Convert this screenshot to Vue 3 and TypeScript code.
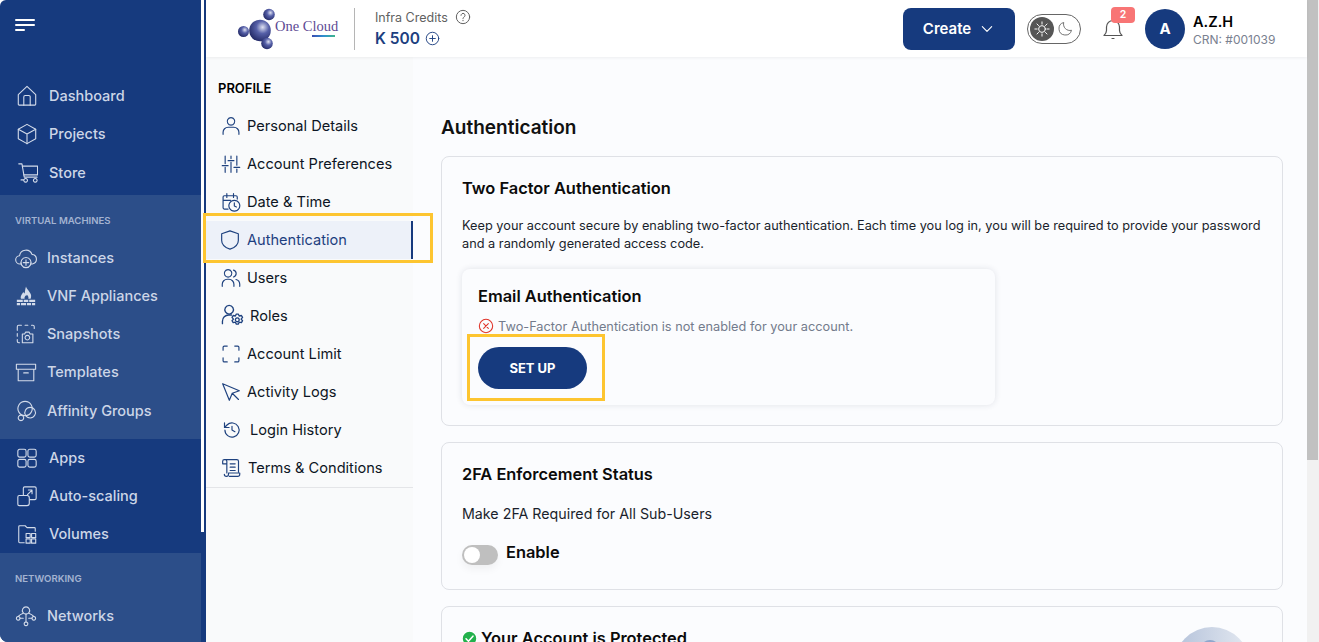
<script setup lang="ts">
interface Item { label: string; paths: string[]; size?: number; cls?: string }

const groupA: Item[] = [
  { label: 'Dashboard', paths: ['M2.500 21V10.500L12 1.500l9.500 9V21a1 1 0 0 1-1 1h-17a1 1 0 0 1-1-1Z', 'M8.500 22v-9a1.500 1.500 0 0 1 1.500-1.500h4a1.500 1.500 0 0 1 1.500 1.500v9'] },
  { label: 'Projects', paths: ['M12 1.500l9.500 5.300v10.400L12 22.500l-9.500-5.300V6.800Z', 'M2.500 6.800L12 12l9.500-5.200M12 12v10.500'] },
  { label: 'Store', paths: ['M3 2h3.500l2.500 14.500h14', 'M7 4.500h16.500V14H8.500', 'M10.500 18a2 2 0 1 0 .01 0ZM21 18a2 2 0 1 0 .01 0ZM8.500 19.500H5.500'] },
]
const groupB: Item[] = [
  { label: 'Instances', paths: ['M6.500 18.500H5.500a4.500 4.500 0 0 1-.5-9A7 7 0 0 1 18.500 8a5.300 5.300 0 0 1 .5 10.500H18', 'M12 11.500a5.500 5.500 0 1 0 .01 0ZM12 14v6M9 17h6'], cls: 'big' },
  { label: 'VNF Appliances', paths: ['M2 16h6.500v2.500H2ZM9.500 16h5v2.500h-5ZM15.500 16H22v2.500h-6.500ZM2 19.500h3.500V22H2ZM6.500 19.500H12V22H6.500ZM13 19.500h4.500V22H13ZM18.500 19.500H22V22h-3.500Z', 'M6.500 15c-1-3.500 1.500-5 2.500-7.500.6 1 1 1.500 1.500 1.800C11 7 11 4.500 12 1.500c1 3.500 5 6 5.500 9.500.2 1.500 0 3-.5 4h-2.500c.5-1.500 0-3-1.500-4.500-.3 1.200-1 1.500-1.500 1-.5 1-1.500 2-1 3.500Z'], cls: 'solid' },
  { label: 'Snapshots', paths: ['M5 21.500H4a1.500 1.500 0 0 1-1.500-1.500v-2M2.500 14.500v-3M2.500 8V4A1.500 1.500 0 0 1 4 2.500h3M11 2.500h3M18 2.500h1.500A1.500 1.500 0 0 1 21 4v2', 'M8 12h2.500l1-2h4l1 2H19.500v9.500H8Z', 'M13.500 13.500a2.500 2.500 0 1 0 .01 0Z'] },
  { label: 'Templates', paths: ['M1.500 3.500h21V9h-21ZM3.500 9v12.500h17V9M9.500 13h5'] },
  { label: 'Affinity Groups', paths: ['M11 1.500a7.800 7.800 0 1 0 .01 0Z', 'M16.500 8a5.800 5.800 0 1 0 .01 0Z', 'M6.500 16.500a3 3 0 1 0 .01 0Z'] },
]
const groupC: Item[] = [
  { label: 'Apps', paths: ['M4 2.500h5a2 2 0 0 1 2 2V9a2 2 0 0 1-2 2H4a2 2 0 0 1-2-2V4.500a2 2 0 0 1 2-2ZM15 2.500h5a2 2 0 0 1 2 2V9a2 2 0 0 1-2 2h-5a2 2 0 0 1-2-2V4.500a2 2 0 0 1 2-2ZM4 13.500h5a2 2 0 0 1 2 2V20a2 2 0 0 1-2 2H4a2 2 0 0 1-2-2v-4.500a2 2 0 0 1 2-2ZM15 13.500h5a2 2 0 0 1 2 2V20a2 2 0 0 1-2 2h-5a2 2 0 0 1-2-2v-4.500a2 2 0 0 1 2-2Z'] },
  { label: 'Auto-scaling', paths: ['M8 11V3.500A1.500 1.500 0 0 1 9.500 2h11A1.500 1.500 0 0 1 22 3.500v11a1.500 1.500 0 0 1-1.500 1.500H15', 'M3.500 11.500H12a2.500 2.500 0 0 1 2.500 2.500v6a2.500 2.500 0 0 1-2.500 2.500H3.500A1.500 1.500 0 0 1 2 21v-8a1.500 1.500 0 0 1 1.500-1.500Z', 'M12.500 10.500l5-5M13.500 5.500h4v4'] },
  { label: 'Volumes', paths: ['M9 21.500H4a1 1 0 0 1-1-1V4a1 1 0 0 1 1-1h6l2 2h8a1 1 0 0 1 1 1v3', 'M11 11.500h4.500V16H11ZM17 11.500h4.500V16H17ZM11 17.500h4.500V22H11ZM17 17.500h4.500V22H17Z'] },
]
const groupD: Item[] = [
  { label: 'Networks', paths: ['M12 2a4 4 0 1 0 .01 0Z', 'M3.500 12.500a2 2 0 1 0 .01 0ZM20.500 12.500a2 2 0 1 0 .01 0ZM12 18.500a2 2 0 1 0 .01 0Z', 'M9 9c-2 .8-4 2-5.500 3.500M15 9c2 .8 4 2 5.500 3.500M12 10v8.500M5.500 14.500H9M15 14.500h3.500'] },
]

const profile: Item[] = [
  { label: 'Personal Details', paths: ['M12 2a4.500 4.500 0 1 0 .01 0Z', 'M2.500 22v-2.500a6 6 0 0 1 6-6h7a6 6 0 0 1 6 6V22'] },
  { label: 'Account Preferences', paths: ['M5 2.500v9M5 16v6M12 2.500v3M12 10v12M19 2.500v11M19 18v4M1.500 14h7M8.500 8h7M15.500 16h7'] },
  { label: 'Date & Time', paths: ['M8.500 20.500H4a1.500 1.500 0 0 1-1.500-1.500V6A1.500 1.500 0 0 1 4 4.500h14A1.500 1.500 0 0 1 19.500 6v2.500M2.500 10h9M7 2v4.500M15 2v4.500', 'M16 10a6.500 6.500 0 1 0 .01 0ZM16 13v3.800l2.500 1.200'] },
  { label: 'Authentication', paths: ['M12 1l10 3.500v8c0 5-4 8.500-10 10.500C6 21 2 17.500 2 12.500v-8Z'], cls: 'active' },
  { label: 'Users', paths: ['M8.500 2a4.500 4.500 0 1 0 .01 0Z', 'M1.500 22v-2.500a6 6 0 0 1 6-6h2a6 6 0 0 1 6 6V22', 'M15 2.500a4.300 4.300 0 0 1 0 8.300M18 13.800a6 6 0 0 1 4.500 5.700V22'] },
  { label: 'Roles', paths: ['M8.500 1.500a4.500 4.500 0 1 0 .01 0Z', 'M1.500 20.500V18A6.500 6.500 0 0 1 8 11.500h3', 'M18 10.500l1 2 2.300-.5 1.200 2-1.500 1.800 1.500 1.700-1.200 2-2.300-.5-1 2h-2l-1-2-2.300.5-1.200-2 1.500-1.700-1.500-1.800 1.200-2 2.300.5 1-2Z', 'M17 14.500a2 2 0 1 0 .01 0Z'], size: 23, cls: 'wide' },
  { label: 'Account Limit', paths: ['M2.500 7.500V4A1.500 1.500 0 0 1 4 2.500h3.500M16.500 2.500H20A1.500 1.500 0 0 1 21.500 4v3.500M21.500 16.500V20a1.500 1.500 0 0 1-1.500 1.500h-3.500M7.500 21.500H4A1.500 1.500 0 0 1 2.500 20v-3.500'] },
  { label: 'Activity Logs', paths: ['M2 2l20 8.500-8.500 3L10 22ZM13.500 13.500L21 21'] },
  { label: 'Login History', paths: ['M3.500 12A8.500 8.500 0 1 0 6 6L3 9', 'M3 3.500V9h5.500M12 7.500V12l3.500 2'], cls: 'wider' },
  { label: 'Terms & Conditions', paths: ['M7 18V4a2 2 0 0 0-2-2H4a2 2 0 0 0-2 2v3h5M5 2h14a2 2 0 0 1 2 2v13', 'M10 22h10a2.500 2.500 0 0 0 2.500-2.500V18H9v1.500a2.500 2.500 0 0 1-5 0', 'M11 7h6M11 11h6M11 15h6'], cls: 'terms' },
]
</script>

<template>
  <div class="shell">
    <aside class="sidebar">
      <div class="thumb"></div>
      <section class="group dark first">
        <div class="burger"><i class="l1"></i><i class="l2"></i><i class="l3"></i></div>
        <a v-for="it in groupA" :key="it.label" class="side-item">
          <svg class="side-icon" viewBox="0 0 24 24"><path v-for="d in it.paths" :key="d" :d="d" /></svg>
          <span>{{ it.label }}</span>
        </a>
      </section>
      <section class="group light second">
        <h4>VIRTUAL MACHINES</h4>
        <a v-for="it in groupB" :key="it.label" class="side-item tight" :class="it.cls">
          <svg class="side-icon" viewBox="0 0 24 24"><path v-for="d in it.paths" :key="d" :d="d" /></svg>
          <span>{{ it.label }}</span>
        </a>
      </section>
      <section class="group dark">
        <a v-for="it in groupC" :key="it.label" class="side-item">
          <svg class="side-icon" viewBox="0 0 24 24"><path v-for="d in it.paths" :key="d" :d="d" /></svg>
          <span>{{ it.label }}</span>
        </a>
      </section>
      <section class="group light fourth">
        <h4>NETWORKING</h4>
        <a v-for="it in groupD" :key="it.label" class="side-item tight">
          <svg class="side-icon" viewBox="0 0 24 24"><path v-for="d in it.paths" :key="d" :d="d" /></svg>
          <span>{{ it.label }}</span>
        </a>
      </section>
    </aside>

    <div class="page">
      <header class="topbar">
        <div class="logo">
          <svg class="logo-mark" viewBox="0 0 38 42">
            <defs>
              <radialGradient id="orb" cx="62%" cy="35%" r="65%">
                <stop offset="0%" stop-color="#dfe2f2" />
                <stop offset="45%" stop-color="#5660a8" />
                <stop offset="100%" stop-color="#272e6c" />
              </radialGradient>
            </defs>
            <circle cx="22" cy="22.500" r="10.800" fill="url(#orb)" />
            <circle cx="31" cy="6.500" r="5.800" fill="url(#orb)" />
            <circle cx="5.500" cy="23.500" r="5.500" fill="url(#orb)" />
            <circle cx="29" cy="35.500" r="5.800" fill="url(#orb)" />
          </svg>
          <div class="logo-text">
            <span>One Cloud</span>
            <i></i>
          </div>
        </div>
        <div class="credits">
          <div class="credits-label">
            Infra Credits
            <svg viewBox="0 0 24 24"><circle cx="12" cy="12" r="10" /><path d="M9 9.500a3 3 0 1 1 4.500 2.600c-1 .6-1.500 1.200-1.500 2.400M12 17v.6" /></svg>
          </div>
          <div class="credits-value">
            K 500
            <svg viewBox="0 0 24 24"><circle cx="12" cy="12" r="10" /><path d="M12 7.500v9M7.500 12h9" /></svg>
          </div>
        </div>
        <div class="spacer"></div>
        <button class="create">Create
          <svg viewBox="0 0 24 24"><path d="M5 8.500l7 7 7-7" /></svg>
        </button>
        <div class="theme">
          <span class="sun">
            <svg viewBox="0 0 24 24"><circle cx="12" cy="12" r="4.500" /><path d="M12 2.500v3M12 18.500v3M2.500 12h3M18.500 12h3M5.300 5.300l2.100 2.100M16.600 16.600l2.100 2.100M5.300 18.700l2.100-2.100M16.600 7.400l2.100-2.100" /></svg>
          </span>
          <svg class="moon" viewBox="0 0 24 24"><path d="M20.500 14.500A9 9 0 0 1 9.500 3.500a9 9 0 1 0 11 11Z" /></svg>
        </div>
        <div class="bell">
          <svg viewBox="0 0 24 24"><path d="M3 18.500c1.500-1.500 2.500-2.500 2.500-5V10a6.500 6.500 0 0 1 13 0v3.500c0 2.500 1 3.500 2.500 5ZM11 21.500h2" /></svg>
          <b>2</b>
        </div>
        <div class="avatar">A</div>
        <div class="who">
          <strong>A.Z.H</strong>
          <small>CRN: #001039</small>
        </div>
      </header>

      <div class="body">
        <nav class="profile">
          <h3>PROFILE</h3>
          <a v-for="it in profile" :key="it.label" class="prof-item" :class="it.cls">
            <svg :style="it.size ? { width: it.size + 'px', height: it.size + 'px' } : undefined" viewBox="0 0 24 24"><path v-for="d in it.paths" :key="d" :d="d" /></svg>
            <span>{{ it.label }}</span>
          </a>
        </nav>

        <main class="main">
          <h1>Authentication</h1>
          <section class="card">
            <h2>Two Factor Authentication</h2>
            <p class="lead">Keep your account secure by enabling two-factor authentication. Each time you log in, you will be required to provide your password and a randomly generated access code.</p>
            <div class="inner">
              <h2>Email Authentication</h2>
              <div class="status">
                <svg viewBox="0 0 24 24"><circle cx="12" cy="12" r="10" /><path d="M8.500 8.500l7 7M15.500 8.500l-7 7" /></svg>
                Two-Factor Authentication is not enabled for your account.
              </div>
              <div class="setup-wrap"><button class="setup">SET UP</button></div>
            </div>
          </section>
          <section class="card enforce">
            <h2>2FA Enforcement Status</h2>
            <p class="make">Make 2FA Required for All Sub-Users</p>
            <div class="enable">
              <span class="switch"><i></i></span>
              <b>Enable</b>
            </div>
          </section>
          <section class="card third">
            <h2 class="ok">
              <svg viewBox="0 0 24 24"><circle cx="12" cy="12" r="12" /><path d="M6.500 12.500l3.800 3.800 7.200-8" /></svg>
              Your Account is Protected
            </h2>
            <div class="orb"><i></i></div>
          </section>
        </main>
      </div>
    </div>

    <div class="scroll"><div class="scroll-thumb"></div></div>
  </div>
</template>

<style>
html, body { margin: 0; background: #fff; overflow: hidden; }
</style>

<style scoped>
* { box-sizing: border-box; }
.shell {
  display: flex;
  width: 1319px;
  height: 642px;
  overflow: hidden;
  font-family: Inter, "Noto Sans", sans-serif;
  color: #0b0f1a;
  background: #fff;
}
.sidebar {
  position: relative;
  flex: 0 0 206px;
  height: 642px;
  background: #163a7e;
  border-radius: 6px 0 0 8px;
  overflow: hidden;
}
.thumb {
  position: absolute;
  left: 201px;
  top: 0;
  width: 3px;
  height: 532px;
  background: #fff;
  z-index: 2;
}
.group { width: 201px; }
.light { background: #2c4e89; }
.first { height: 195px; padding-top: 77px; position: relative; }
.second { height: 244px; }
.fourth { height: 89px; }
.burger {
  position: absolute;
  left: 15px;
  top: 19px;
  display: flex;
  flex-direction: column;
  gap: 3px;
}
.burger i { display: block; height: 2px; background: #fff; border-radius: 1px; }
.burger .l1 { width: 20px; }
.burger .l2 { width: 20px; }
.burger .l3 { width: 10px; }
.group h4 {
  margin: 0;
  height: 44px;
  padding: 19px 0 0 15px;
  font-size: 9.600px;
  line-height: 14px;
  font-weight: 600;
  color: #a3b3d1;
}
.side-item {
  display: flex;
  align-items: center;
  height: 38px;
  padding-left: 16px;
  padding-bottom: 1px;
  gap: 11px;
  font-size: 14.500px;
  font-weight: 500;
  color: #cdd6e7;
}
.first .side-item:last-child,
.second .side-item:last-child { margin-top: 1px; }
.side-item.tight { padding-left: 15px; gap: 10px; }
.side-icon {
  width: 22px;
  height: 22px;
  flex: none;
  fill: none;
  stroke: #d3dbea;
  stroke-width: 1.200;
  stroke-linejoin: round;
  stroke-linecap: round;
}
.side-item.solid .side-icon { fill: #d3dbea; stroke: none; }

.page {
  flex: 1;
  min-width: 0;
  display: flex;
  flex-direction: column;
  height: 642px;
}
.topbar {
  flex: 0 0 57px;
  display: flex;
  align-items: center;
  background: #fff;
  box-shadow: 0 1px 3px rgba(0, 0, 0, .06);
  position: relative;
  z-index: 1;
}
.logo {
  display: flex;
  align-items: center;
  margin-left: 32px;
  width: 117px;
  height: 42px;
  border-right: 1px solid #b5b5b5;
}
.logo-mark { width: 38px; height: 42px; flex: none; }
.logo-text {
  display: flex;
  flex-direction: column;
  align-items: flex-end;
  margin-left: -1px;
  margin-bottom: 2px;
}
.logo-text span {
  font-family: "Liberation Serif", serif;
  font-size: 14.500px;
  line-height: 15px;
  color: #5d4a94;
  white-space: nowrap;
}
.logo-text i {
  width: 23px;
  height: 2px;
  margin-top: 1px;
  margin-right: 3px;
  background: linear-gradient(90deg, #3a4bb0, #2f8fd0, #3fb68b);
}
.credits { margin-left: 20px; }
.credits-label {
  display: flex;
  align-items: center;
  gap: 7px;
  height: 18px;
  font-size: 12.500px;
  color: #616161;
}
.credits-label svg { width: 16px; height: 16px; fill: none; stroke: #616161; stroke-width: 1.500; stroke-linecap: round; }
.credits-value {
  display: flex;
  align-items: center;
  gap: 5px;
  height: 22px;
  margin-top: 1px;
  font-size: 15.500px;
  font-weight: 600;
  color: #1d3f80;
}
.credits-value svg { width: 15px; height: 15px; fill: none; stroke: #1d3f80; stroke-width: 1.500; stroke-linecap: round; }
.spacer { flex: 1; }
.create {
  display: flex;
  align-items: center;
  justify-content: center;
  gap: 8px;
  width: 112px;
  height: 42px;
  border: 0;
  border-radius: 8px;
  background: #163a7e;
  color: #fff;
  font: 600 15px Inter, sans-serif;
}
.create svg { width: 16px; height: 16px; fill: none; stroke: #fff; stroke-width: 1.700; stroke-linecap: round; stroke-linejoin: round; }
.theme {
  display: flex;
  align-items: center;
  width: 54px;
  height: 30px;
  margin-left: 12px;
  padding-left: 2px;
  border: 1px solid #666;
  border-radius: 15px;
}
.sun {
  display: flex;
  align-items: center;
  justify-content: center;
  width: 24px;
  height: 24px;
  border-radius: 50%;
  background: #565656;
}
.sun svg { width: 18px; height: 18px; fill: none; stroke: #fff; stroke-width: 1.300; stroke-linecap: round; }
.moon { width: 17px; height: 17px; margin-left: 3px; fill: none; stroke: #666; stroke-width: 1.300; stroke-linejoin: round; }
.bell {
  position: relative;
  width: 24px;
  height: 24px;
  margin-left: 20px;
  margin-top: 1px;
}
.bell svg { width: 24px; height: 24px; fill: none; stroke: #555; stroke-width: 1.200; stroke-linejoin: round; stroke-linecap: round; }
.bell b {
  position: absolute;
  left: 10px;
  top: -10px;
  width: 24px;
  height: 16px;
  border-radius: 4px;
  background: #f87575;
  color: #fff;
  font-size: 10.500px;
  font-weight: 600;
  line-height: 16px;
  text-align: center;
}
.avatar {
  flex: none;
  width: 40px;
  height: 40px;
  margin-left: 20px;
  border-radius: 50%;
  background: #163a7e;
  color: #fff;
  font-size: 15px;
  font-weight: 700;
  line-height: 40px;
  text-align: center;
}
.who { flex: 0 0 122px; display: flex; flex-direction: column; padding: 3px 0 0 8px; }
.who strong { font-size: 14.500px; line-height: 20px; font-weight: 600; color: #000; }
.who small { font-size: 12px; line-height: 16px; margin-top: 0; color: #7a8190; }

.body { flex: 1; min-height: 0; display: flex; background: #fbfcfe; }
.profile { flex: 0 0 207px; background: #f9fafb; padding-top: 20px; }
.profile h3 {
  margin: 0 0 8px 12px;
  font-size: 13px;
  line-height: 22px;
  font-weight: 600;
  color: #000;
}
.prof-item {
  position: relative;
  display: flex;
  align-items: center;
  height: 38px;
  padding-left: 15px;
  padding-bottom: 1px;
  gap: 6px;
  font-size: 14.600px;
  color: #0d1524;
}
.prof-item svg {
  width: 20px;
  height: 20px;
  flex: none;
  fill: none;
  stroke: #1f427f;
  stroke-width: 1.400;
  stroke-linecap: round;
  stroke-linejoin: round;
}
.prof-item.active {
  width: 207px;
  background: #edf1f9;
  color: #1d3f80;
  padding-left: 14px;
  padding-bottom: 0;
  gap: 7px;
  border-right: 2px solid #163a7e;
}
.prof-item.active::after {
  content: "";
  position: absolute;
  left: -3px;
  right: -22px;
  top: -8px;
  bottom: -4px;
  border: 3px solid #fdc530;
  pointer-events: none;
  z-index: 3;
}
.prof-item.wide { gap: 6px; }
.prof-item.wider { padding-left: 16px; gap: 8px; }
.prof-item.terms { height: 39px; padding-bottom: 0; gap: 7px; border-bottom: 1px solid #e4e5e8; }
.main {
  flex: 1;
  min-width: 0;
  padding: 58px 24px 0 28px;
}
h1 {
  height: 24px;
  margin: 0 0 17px;
  padding-top: 1px;
  font-size: 19px;
  line-height: 24px;
  font-weight: 600;
  color: #111;
}
.card {
  border: 1px solid #dfe1e6;
  border-radius: 8px;
  padding: 20px;
  margin-bottom: 16px;
}
.enforce { padding-bottom: 24px; }
h2 {
  height: 22px;
  margin: 0;
  font-size: 16.400px;
  line-height: 22px;
  font-weight: 600;
  color: #0b0b0b;
}
.lead {
  margin: 18px 0 16px;
  font-size: 12.750px;
  line-height: 18px;
  color: #1a1f2c;
}
.inner {
  width: 533px;
  height: 136px;
  padding: 16px;
  border-radius: 8px;
  box-shadow: 0 0 6px rgba(30, 40, 70, .12);
}
.status {
  display: flex;
  align-items: center;
  gap: 4px;
  margin-top: 10px;
  height: 18px;
  font-size: 12.750px;
  color: #737b8c;
}
.status svg { width: 16px; height: 16px; fill: none; stroke: #e0352b; stroke-width: 1.600; stroke-linecap: round; }
.setup-wrap {
  position: relative;
  width: 109px;
  margin-top: 12px;
}
.setup-wrap::after {
  content: "";
  position: absolute;
  left: -11px;
  right: -18px;
  top: -13px;
  bottom: -12px;
  border: 3px solid #fdc530;
  pointer-events: none;
}
.setup {
  display: block;
  width: 109px;
  height: 42px;
  border: 0;
  border-radius: 21px;
  background: #163a7e;
  color: #fff;
  font: 700 13px Inter, sans-serif;
}
.make { margin: 19px 0 21px; font-size: 14.250px; line-height: 20px; color: #1a1f2c; }
.enable { display: flex; align-items: flex-start; gap: 8px; height: 20px; }
.enable b { font-size: 16.400px; line-height: 15px; font-weight: 600; color: #0b0b0b; }
.switch {
  display: block;
  width: 36px;
  height: 20px;
  border-radius: 10px;
  background: #bfbfbf;
  padding: 2px;
  box-shadow: 0 4px 8px rgba(0, 0, 0, .05);
}
.switch i { display: block; width: 16px; height: 16px; border-radius: 50%; background: #fff; }
.third { display: flex; justify-content: space-between; align-items: flex-start; height: 120px; margin-bottom: 0; }
.ok { display: flex; align-items: center; gap: 4px; white-space: nowrap; }
.ok svg { width: 15px; height: 15px; fill: #22b14c; stroke: #fff; stroke-width: 2.500; stroke-linecap: round; stroke-linejoin: round; }
.orb {
  position: relative;
  width: 76px;
  height: 76px;
  margin-right: 12px;
  border-radius: 50%;
  background: linear-gradient(90deg, #b4c2da, #e4e9f1);
}
.orb i {
  position: absolute;
  left: 26px;
  top: 13px;
  width: 20px;
  height: 40px;
  border-radius: 10px 10px 0 0;
  background: #8ea6cc;
}
.scroll {
  flex: 0 0 12px;
  height: 642px;
  background: #f1f1f1;
}
.scroll-thumb { width: 11px; height: 460px; background: #c1c1c1; }
</style>
